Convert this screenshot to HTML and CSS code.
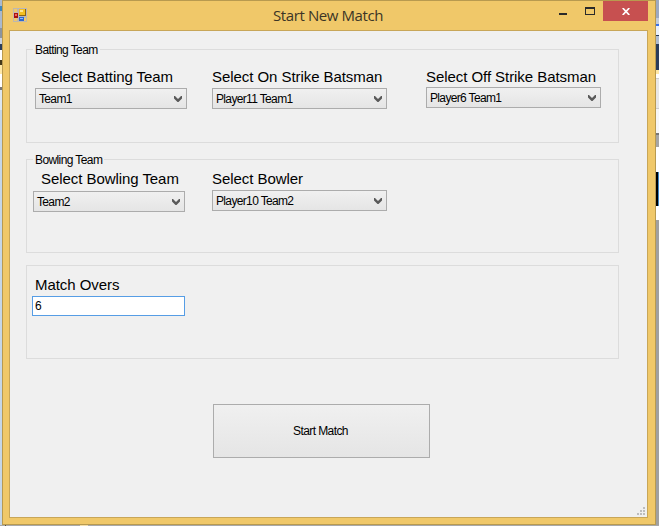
FILE: index.html
```html
<!DOCTYPE html>
<html lang="en">
<head>
<meta charset="utf-8">
<title>Start New Match</title>
<link rel="stylesheet" href="styles.css">
</head>
<body>
<div class="desktop">
  <main class="window">
    <header class="titlebar">
      <svg class="app-icon" width="14" height="14" viewBox="0 0 14 14" shape-rendering="crispEdges">
        <path d="M.5 .5h4v4h-4zM.5 9.500h4v4h-4zM11 9.500h2.500v4H5.500V9" fill="none" stroke="#bdb8ae"/>
        <path d="M5 0h9v9H5z" fill="#b9b7ba"/>
        <path d="M6 1h7v7H6z" fill="#8d6511"/>
        <path d="M6 1h6v6H6z" fill="#f4bf20"/>
        <path d="M7 2h3v2H7z" fill="#ffe793"/>
        <path d="M0 4h5v6H0z" fill="#c5b8b1"/>
        <path d="M1 5h4v5H1z" fill="#a61111"/>
        <path d="M2 6h2v2H2z" fill="#ef6659"/>
        <path d="M6 9h5v4H6z" fill="#2e67cf"/>
        <path d="M7 10h3v1H7z" fill="#8bbdff"/>
      </svg>
      <h1 class="title">Start New Match</h1>
      <svg class="minimize" width="8" height="2"><path d="M0 0h8v2H0z" fill="#2a2a2a"/></svg>
      <svg class="maximize" width="10" height="8" shape-rendering="crispEdges"><path d="M0 0h10v8H0zM1 2v5h8V2z" fill="#2a2a2a" fill-rule="evenodd"/></svg>
      <button class="close" aria-label="Close"><svg width="8" height="7" viewBox="0 0 8 7"><path d="M.7 0 7.300 7M7.300 0 .7 7" stroke="#fff" stroke-width="1.700"/></svg></button>
    </header>

    <section class="client">
      <section class="group batting">
        <h2 class="legend">Batting Team</h2>
        <div class="field team">
          <label class="label indent">Select Batting Team</label>
          <div class="combo"><span>Team1</span><svg class="chevron" width="8" height="6" viewBox="0 0 8 6"><path d="M0 0h1L4 3 7 0h1v2.500L4.500 6h-1L0 2.500z" fill="#5a5a5a"/></svg></div>
        </div>
        <div class="field striker">
          <label class="label">Select On Strike Batsman</label>
          <div class="combo"><span>Player11 Team1</span><svg class="chevron" width="8" height="6" viewBox="0 0 8 6"><path d="M0 0h1L4 3 7 0h1v2.500L4.500 6h-1L0 2.500z" fill="#5a5a5a"/></svg></div>
        </div>
        <div class="field nonstriker">
          <label class="label">Select Off Strike Batsman</label>
          <div class="combo"><span>Player6 Team1</span><svg class="chevron" width="8" height="6" viewBox="0 0 8 6"><path d="M0 0h1L4 3 7 0h1v2.500L4.500 6h-1L0 2.500z" fill="#5a5a5a"/></svg></div>
        </div>
      </section>

      <section class="group bowling">
        <h2 class="legend">Bowling Team</h2>
        <div class="field team">
          <label class="label indent">Select Bowling Team</label>
          <div class="combo"><span>Team2</span><svg class="chevron" width="8" height="6" viewBox="0 0 8 6"><path d="M0 0h1L4 3 7 0h1v2.500L4.500 6h-1L0 2.500z" fill="#5a5a5a"/></svg></div>
        </div>
        <div class="field bowler">
          <label class="label">Select Bowler</label>
          <div class="combo"><span>Player10 Team2</span><svg class="chevron" width="8" height="6" viewBox="0 0 8 6"><path d="M0 0h1L4 3 7 0h1v2.500L4.500 6h-1L0 2.500z" fill="#5a5a5a"/></svg></div>
        </div>
      </section>

      <section class="group overs">
        <div class="field">
          <label class="label" for="overs">Match Overs</label>
          <input class="textbox" id="overs" type="text" value="6">
        </div>
      </section>

      <button class="start">Start Match</button>
      <svg class="grip" width="8" height="8" shape-rendering="crispEdges"><path d="M6 0h2v2H6zM3 3h2v2H3zM6 3h2v2H6zM0 6h2v2H0zM3 6h2v2H3zM6 6h2v2H6z" fill="#bdbdbd"/></svg>
    </section>
  </main>
</div>
</body>
</html>
```
FILE: styles.css
```css
* { box-sizing: border-box; }

body {
  margin: 0;
  overflow: hidden;
  font-family: "Liberation Sans", Arial, sans-serif;
  color: #000;
}

.desktop {
  width: 659px;
  height: 526px;
  padding: 0 3px 1px 2px;
  display: flex;
  background:
    linear-gradient(#5b4d32, #5b4d32) 5px 525px / 1px 1px no-repeat,
    linear-gradient(#f3dfae, #f3dfae) 80px 525px / 8px 1px no-repeat,
    linear-gradient(#a9a9a9, #a9a9a9) 0 525px / 659px 1px no-repeat,
    linear-gradient(#3f87c4, #3f87c4) 658px 172px / 1px 34px no-repeat,
    linear-gradient(#9ca9c1 0 18px, #c3cddc 18px 24px, #3b72e8 24px 26px, #e9f0fb 26px 35px, #263958 35px 36px, #aebbd0 36px 44px, #293c5b 44px 70px, #ffe8a6 70px 74px, #fff 74px 78px, #ccc 78px 79px, #e7e7e7 79px 108px, #ccc 108px 109px, #f6f6f6 109px 133px, #777 133px 135px, #a5a5a5 135px 147px, #fff 147px 172px, #000 172px 206px, #fff 206px 220px, #a0a0a0 220px) right top / 3px 525px no-repeat,
    linear-gradient(#a9b8ce 0 6px, #3b86bd 6px 11px, #a9b8ce 11px 28px, #8a949f 28px 38px, #c9d2df 38px 44px, #293c5b 44px 50px, #fff 50px 60px, #43381b 60px 65px, #ffe8a6 65px 74px, #fff 74px 87px, #777 87px 90px, #dce6f1 90px 110px, #c5d6e8 110px) left top / 2px 525px no-repeat;
}

.window {
  width: 654px;
  height: 525px;
  padding: 0 7px 6px 6px;
  border: 1px solid #b89a4f;
  background: #f0c869;
}

.titlebar {
  height: 29px;
  display: flex;
  align-items: flex-start;
}

.app-icon { margin: 7px 0 0 4px; }

.title {
  width: 112px;
  margin: 4px 0 0 246px;
  font: 15px/20px "Open Sans", sans-serif;
  letter-spacing: -0.4px;
  white-space: nowrap;
  color: #3b3526;
}

.minimize { margin: 12px 0 0 174px; }
.maximize { margin: 6px 0 0 18px; }

.close {
  width: 45px;
  height: 20px;
  margin: 0 0 0 8px;
  padding: 1px 0 0;
  display: flex;
  align-items: center;
  justify-content: center;
  border: 0;
  background: #c75050;
}

.client {
  position: relative;
  width: 639px;
  height: 488px;
  padding: 18px 0 0 16px;
  display: flex;
  flex-direction: column;
  border: 1px solid #c8a658;
  background: #f0f0f0;
}

.group {
  position: relative;
  width: 593px;
  height: 94px;
  flex: none;
  display: flex;
  align-items: flex-start;
  border: 1px solid #dcdcdc;
}

.bowling { margin-top: 16px; }
.overs { margin-top: 12px; }

.legend {
  position: absolute;
  top: -7px;
  left: 6px;
  margin: 0;
  padding: 0 2px;
  font-size: 12px;
  font-weight: 400;
  line-height: 14px;
  letter-spacing: -0.6px;
  white-space: nowrap;
  background: #f0f0f0;
}

.field {
  display: flex;
  flex-direction: column;
}

.label {
  height: 20px;
  font-size: 15px;
  line-height: 18px;
  letter-spacing: -0.06px;
  white-space: nowrap;
}

.batting .field { padding-top: 18px; }
.batting .team { width: 152px; margin-left: 8px; }
.batting .striker { width: 175px; margin-left: 25px; }
.batting .nonstriker { width: 175px; margin-left: 39px; }
.batting .nonstriker .combo { margin-top: -1px; }
.batting .indent { margin-left: 6px; }

.bowling .field { padding-top: 10px; }
.bowling .team { width: 152px; margin-left: 6px; }
.bowling .team .combo { margin-top: 1px; }
.bowling .bowler { width: 175px; margin-left: 27px; }
.bowling .indent { margin-left: 8px; }

.overs .field { width: 153px; padding-top: 10px; margin-left: 5px; }
.overs .label { margin-left: 3px; }

.combo {
  height: 21px;
  padding: 1px 4px 0 3px;
  display: flex;
  align-items: center;
  justify-content: space-between;
  border: 1px solid #acacac;
  background: linear-gradient(#f0f0f0, #e5e5e5);
  font-size: 12px;
  line-height: 18px;
  letter-spacing: -0.65px;
  white-space: nowrap;
}

.textbox {
  width: 153px;
  height: 20px;
  padding: 0 2px;
  border: 1px solid #569de5;
  outline: 0;
  background: #fff;
  font: 12px/18px "Liberation Sans", Arial, sans-serif;
}

.start {
  width: 217px;
  height: 54px;
  flex: none;
  margin: 45px 0 0 187px;
  padding: 0 2px 0 0;
  border: 1px solid #acacac;
  background: linear-gradient(#f0f0f0, #e5e5e5);
  font: 12px/16px "Liberation Sans", Arial, sans-serif;
  letter-spacing: -0.6px;
  color: #000;
}

.grip {
  position: absolute;
  right: 2px;
  bottom: 2px;
}
```
